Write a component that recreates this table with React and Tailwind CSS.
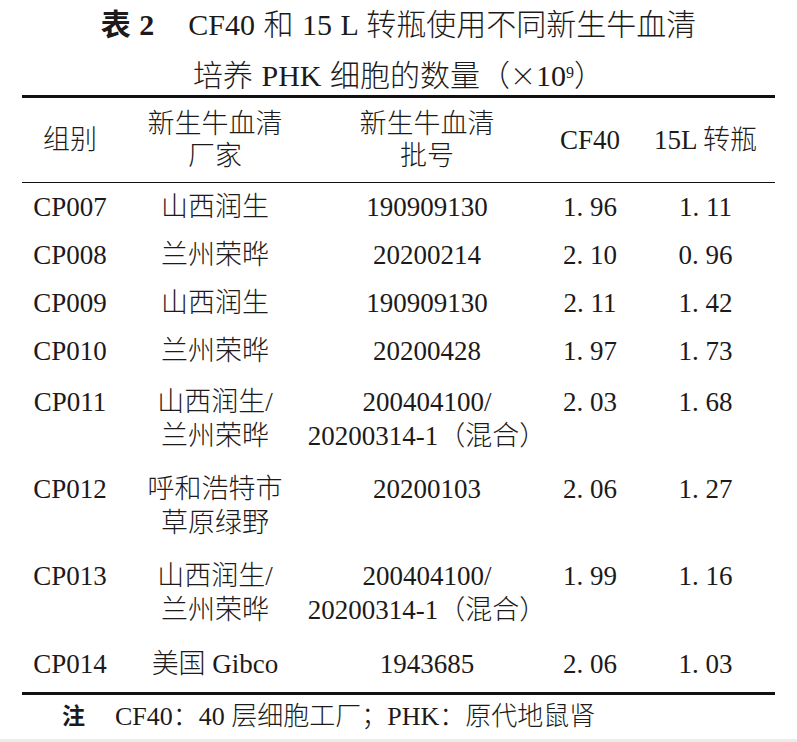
const rows = [
  { id: 'CP007', maker: ['山西润生'], lot: ['190909130'], cf: '1. 96', tb: '1. 11', pad: 'pt-[7px] pb-[7px]' },
  { id: 'CP008', maker: ['兰州荣晔'], lot: ['20200214'], cf: '2. 10', tb: '0. 96', pad: 'pt-[7px] pb-[7px]' },
  { id: 'CP009', maker: ['山西润生'], lot: ['190909130'], cf: '2. 11', tb: '1. 42', pad: 'pt-[7px] pb-[7px]' },
  { id: 'CP010', maker: ['兰州荣晔'], lot: ['20200428'], cf: '1. 97', tb: '1. 73', pad: 'pt-[7px] pb-[7px]' },
  { id: 'CP011', maker: ['山西润生/', '兰州荣晔'], lot: ['200404100/', '20200314-1（混合）'], cf: '2. 03', tb: '1. 68', pad: 'pt-[10px] pb-[9px]' },
  { id: 'CP012', maker: ['呼和浩特市', '草原绿野'], lot: ['20200103'], cf: '2. 06', tb: '1. 27', pad: 'pt-[10px] pb-[9px]' },
  { id: 'CP013', maker: ['山西润生/', '兰州荣晔'], lot: ['200404100/', '20200314-1（混合）'], cf: '1. 99', tb: '1. 16', pad: 'pt-[10px] pb-[9px]' },
  { id: 'CP014', maker: ['美国 Gibco'], lot: ['1943685'], cf: '2. 06', tb: '1. 03', pad: 'pt-[11px] pb-[11px]' },
]

const cols = 'grid grid-cols-[96px_194px_230px_96px_135px]'

function Lines({ items }) {
  return (
    <div className="flex flex-col items-center">
      {items.map((t) => (
        <span key={t} className="whitespace-nowrap">{t}</span>
      ))}
    </div>
  )
}

export default function App() {
  return (
    <div
      className="h-[742px] bg-white text-[#1c1a1a] flex flex-col"
      style={{ fontFamily: '"Liberation Serif", "Noto Sans CJK SC", serif' }}
    >
      {/* title */}
      <div className="h-[95px] flex flex-col items-center text-[30px] leading-[50px] font-light [word-spacing:1px]">
        <div className="whitespace-nowrap">
          <span className="font-bold">表 2</span>
          <span className="ml-[34px]">CF40 和 15 L 转瓶使用不同新生牛血清</span>
        </div>
        <div className="whitespace-nowrap">
          培养 PHK 细胞的数量（<span className="font-['Noto_Sans_CJK_SC'] text-[26px]">×</span>10<sup className="text-[16px]">9</sup>）
        </div>
      </div>

      {/* table */}
      <div className="mx-[22px] border-t-[3px] border-b-[3px] border-[#111]">
        <div className={`${cols} border-b-[1.5px] border-[#111] py-[10px] text-[27px] leading-[32px] text-center font-light`}>
          <div className="self-center">组别</div>
          <Lines items={['新生牛血清', '厂家']} />
          <Lines items={['新生牛血清', '批号']} />
          <div className="self-center">CF40</div>
          <div className="self-center">15L 转瓶</div>
        </div>

        {rows.map((r) => (
          <div key={r.id} className={`${cols} ${r.pad} text-[27px] leading-[34px] text-center font-light`}>
            <div>{r.id}</div>
            <Lines items={r.maker} />
            <Lines items={r.lot} />
            <div>{r.cf}</div>
            <div>{r.tb}</div>
          </div>
        ))}
      </div>

      {/* note */}
      <div className="flex items-center pl-[62px] pt-[8px] text-[26px] leading-[28px] font-light">
        <span className="font-bold text-[23px]">注</span>
        <span className="ml-[30px]">CF40：40 层细胞工厂；PHK：原代地鼠肾</span>
      </div>

      <div className="flex-1" />
      <div className="h-[3px] bg-[#ececec]" />
    </div>
  )
}
